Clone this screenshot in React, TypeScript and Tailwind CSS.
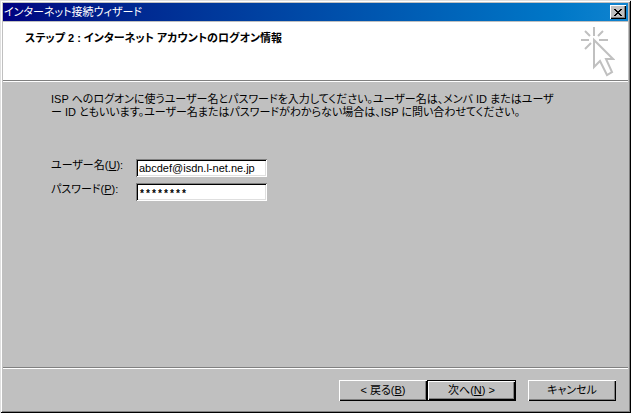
import { useState } from "react";
import type { ReactNode } from "react";

interface WizardButtonProps {
  children: ReactNode;
  isDefault?: boolean;
}

// Raised grey button, the default one gets an extra black frame
function WizardButton({ children, isDefault }: WizardButtonProps) {
  return (
    <button
      type="button"
      className={`flex h-[21px] items-center justify-center whitespace-pre leading-none shadow-[inset_1px_1px_0_#fff,inset_-1px_-1px_0_#000,inset_-2px_-2px_0_#808080] ${
        isDefault ? "w-[89px] border border-black" : "w-[88px]"
      }`}
    >
      {children}
    </button>
  );
}

function ClickIcon() {
  return (
    <svg width="34" height="52" viewBox="0 0 34 52" fill="none" stroke="#c0c0c0" strokeWidth="2" aria-hidden="true">
      <path d="M13 1v9M0 14h8M18 14h9M4 5l5 5M22 5l-5 5M4 23l6-6" />
      <path d="M13 14v27l6-6 7 14 5-3-6-13h7z" />
    </svg>
  );
}

const inputClass =
  "h-[18px] w-[131px] bg-white px-[3px] leading-none text-black outline-none shadow-[inset_1px_1px_0_#808080,inset_-1px_-1px_0_#fff,inset_2px_2px_0_#000,inset_-2px_-2px_0_#dfdfdf]";

export default function ConnectionWizard() {
  const [userName, setUserName] = useState("abcdef@isdn.l-net.ne.jp");
  const [password, setPassword] = useState("********");

  return (
    <main className="flex min-h-screen flex-col bg-[#c0c0c0] p-[3px] font-['Liberation_Sans','Noto_Sans_CJK_JP',sans-serif] text-[11px] leading-[13px] text-black [font-feature-settings:'palt'] shadow-[inset_1px_1px_0_#dfdfdf,inset_-1px_-1px_0_#000,inset_2px_2px_0_#fff,inset_-2px_-2px_0_#808080]">
      {/* Title bar */}
      <header className="flex h-[18px] items-center justify-between bg-linear-to-r from-[#000080] to-[#1084d0] pr-[2px] pl-px text-white">
        <h1 className="whitespace-nowrap">インターネット接続ウィザード</h1>
        <button
          type="button"
          aria-label="閉じる"
          className="flex h-[14px] w-[16px] items-center justify-center bg-[#c0c0c0] shadow-[inset_1px_1px_0_#fff,inset_-1px_-1px_0_#000,inset_-2px_-2px_0_#808080]"
        >
          <svg width="8" height="7" viewBox="0 0 8 7" shapeRendering="crispEdges" aria-hidden="true">
            <path
              d="M0 0h2v1h-2zM6 0h2v1h-2zM1 1h2v1h-2zM5 1h2v1h-2zM2 2h4v1h-4zM3 3h2v1h-2zM2 4h4v1h-4zM1 5h2v1h-2zM5 5h2v1h-2zM0 6h2v1h-2zM6 6h2v1h-2z"
              fill="#000"
            />
          </svg>
        </button>
      </header>

      {/* Step heading */}
      <section className="mt-px flex h-[60px] justify-between border-b border-white bg-white pt-1 pr-[13px] pl-[22px] shadow-[inset_0_-1px_0_#808080]">
        <h2 className="pt-[6px] font-bold">ステップ 2 : インターネット アカウントのログオン情報</h2>
        <ClickIcon />
      </section>

      {/* Form */}
      <section className="flex-1 pt-[11px] pl-12">
        <p className="whitespace-nowrap">
          ISP へのログオンに使うユーザー名とパスワードを入力してください。ユーザー名は、メンバ ID またはユーザ
          <br />
          ー ID ともいいます。ユーザー名またはパスワードがわからない場合は、ISP に問い合わせてください。
        </p>
        <form className="mt-10 grid grid-cols-[85px_131px] gap-y-[6px]">
          <label htmlFor="user" className="whitespace-nowrap">
            ユーザー名(<u>U</u>):
          </label>
          <input
            id="user"
            type="text"
            value={userName}
            onChange={(e) => setUserName(e.target.value)}
            className={inputClass}
          />
          <label htmlFor="pass" className="whitespace-nowrap">
            パスワード(<u>P</u>):
          </label>
          <input
            id="pass"
            type="text"
            value={password}
            onChange={(e) => setPassword(e.target.value)}
            className={`${inputClass} pt-1 font-['Liberation_Mono',monospace] text-[10px] font-bold`}
          />
        </form>
      </section>

      {/* Navigation */}
      <footer className="flex justify-end border-t border-[#808080] pt-3 pr-3 pb-[9px] shadow-[inset_0_1px_0_#fff]">
        <WizardButton>
          {"< 戻る("}
          <u>B</u>)
        </WizardButton>
        <WizardButton isDefault>
          {"次へ("}
          <u>N</u>
          {") >"}
        </WizardButton>
        <div className="ml-3">
          <WizardButton>キャンセル</WizardButton>
        </div>
      </footer>
    </main>
  );
}
